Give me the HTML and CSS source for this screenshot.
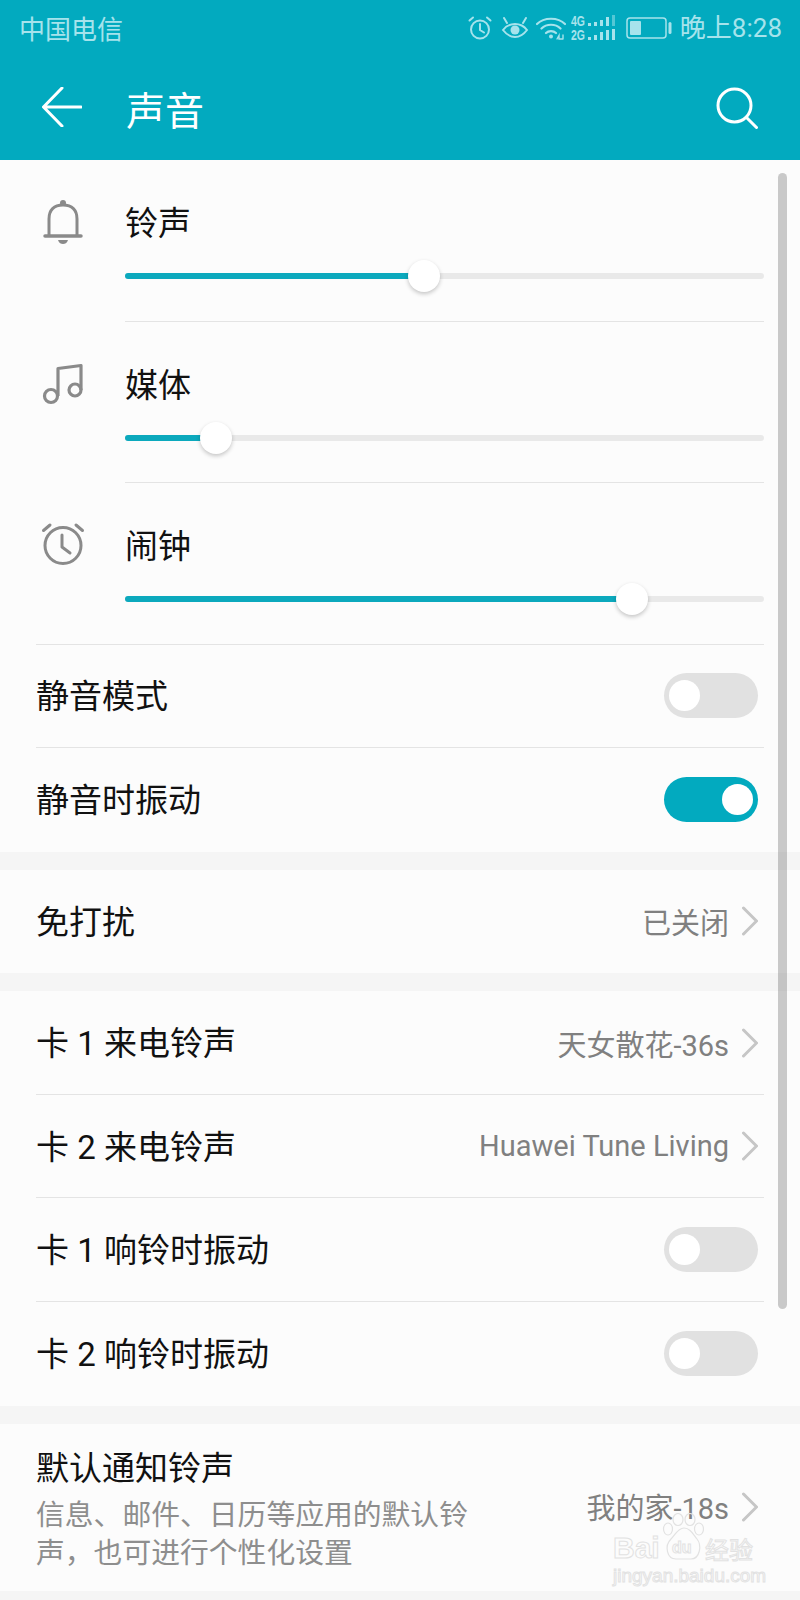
FILE: index.html
```html
<!DOCTYPE html>
<html lang="zh-CN">
<head>
<meta charset="utf-8">
<title>声音</title>
<link rel="stylesheet" href="styles.css">
</head>
<body>
<div class="phone">
  <header class="appbar">
    <div class="status">
      <span class="carrier">中国电信</span>
      <div class="status-right">
        <svg class="si si-alarm" width="24" height="24" viewBox="0 0 24 24" fill="none" stroke="#a6e3ec" stroke-width="2"><circle cx="12" cy="13.5" r="9"/><path d="M12 8v6l4 2.5M1.5 4.5 5 1.5M22.5 4.5 19 1.5" stroke-linecap="round"/></svg>
        <svg class="si si-eye" width="28" height="22" viewBox="0 0 28 22" fill="none" stroke="#a6e3ec" stroke-width="2"><path d="M2 13c3-4 7-6 12-6s9 2 12 6c-3 4-7 7-12 7S5 17 2 13Z"/><circle cx="14" cy="13" r="4.500" fill="#a6e3ec" stroke="none"/><path d="M3 1l3 5M25 1l-3 5" stroke-linecap="round"/></svg>
        <svg class="si si-wifi" width="30" height="24" viewBox="0 0 30 24" fill="none" stroke="#a6e3ec" stroke-width="2.200" stroke-linecap="round"><path d="M1 8C8 1 22 1 29 8M5.500 12.500c5-5 14-5 19 0M10 17c2.500-2.500 7.500-2.500 10 0"/><circle cx="15" cy="20.500" r="2" fill="#a6e3ec" stroke="none"/><path d="M21 23l2-3.500v3.500h3M27 19v4" stroke-width="1.400"/></svg>
        <svg class="si si-signal" width="44" height="34" viewBox="0 -4 44 34">
          <text class="net" x="0" y="11" textLength="14" lengthAdjust="spacingAndGlyphs">4G</text>
          <text class="net" x="0" y="25" textLength="14" lengthAdjust="spacingAndGlyphs">2G</text>
          <g fill="#a6e3ec">
            <rect x="17" y="8" width="3" height="3"/><rect x="23" y="7" width="3" height="4"/><rect x="29" y="5" width="3" height="6"/><rect x="35" y="2" width="3" height="9"/>
            <rect x="41" y="0" width="3" height="11" opacity=".5"/>
            <rect x="17" y="22" width="3" height="3"/><rect x="23" y="20" width="3" height="5"/><rect x="29" y="17" width="3" height="8"/><rect x="35" y="15" width="3" height="10"/><rect x="41" y="14" width="3" height="11"/>
          </g>
        </svg>
        <svg class="si si-batt" width="46" height="22" viewBox="0 0 46 22" fill="none"><rect x="1" y="1" width="39" height="20" rx="3" stroke="#a6e3ec" stroke-width="1.500"/><rect x="4" y="4" width="11" height="14" rx="1" fill="#a6e3ec"/><rect x="42.500" y="5" width="3" height="12" rx="1.500" fill="#a6e3ec"/></svg>
        <span class="time">晚上8:28</span>
      </div>
    </div>
    <div class="toolbar">
      <svg class="back" width="40" height="40" viewBox="0 0 40 40" fill="none" stroke="#fff" stroke-width="3" stroke-linecap="round" stroke-linejoin="round"><path d="M39 20H2M20 1 1.500 20 20 39"/></svg>
      <h1 class="title">声音</h1>
      <svg class="search" width="42" height="42" viewBox="0 0 42 42" fill="none" stroke="#fff" stroke-width="3" stroke-linecap="round"><circle cx="18.500" cy="18.500" r="16.500"/><path d="M30.500 30.500 40.500 40.500"/></svg>
    </div>
  </header>

  <main class="content">
    <section class="group">
      <div class="vol">
        <div class="vol-icon">
          <svg width="44" height="46" viewBox="0 0 44 46" fill="none" stroke="#8a8a8a" stroke-width="3" stroke-linecap="round" stroke-linejoin="round"><path d="M8 36V20C8 11 13 6 22 6s14 5 14 14v16"/><path d="M4 37h36" stroke-width="3.500"/><circle cx="22" cy="4" r="3" fill="#8a8a8a" stroke="none"/><path d="M17 41h10c-1 3-3 4-5 4s-4-1-5-4Z" fill="#8a8a8a" stroke="none"/></svg>
        </div>
        <div class="vol-body">
          <div class="vol-title">铃声</div>
          <div class="track"><div class="fill" style="width:46.8%"><span class="knob"></span></div></div>
        </div>
      </div>
      <div class="vol">
        <div class="vol-icon">
          <svg width="44" height="44" viewBox="0 0 44 44" fill="none" stroke="#8a8a8a" stroke-width="3.200" stroke-linejoin="round"><path d="M17 35V7.500L40 4.500V29"/><circle cx="10" cy="35" r="6.500"/><circle cx="34" cy="29" r="6"/></svg>
        </div>
        <div class="vol-body">
          <div class="vol-title">媒体</div>
          <div class="track"><div class="fill" style="width:14.2%"><span class="knob"></span></div></div>
        </div>
      </div>
      <div class="vol">
        <div class="vol-icon">
          <svg width="44" height="44" viewBox="0 0 44 44" fill="none" stroke="#8a8a8a" stroke-width="3" stroke-linecap="round" stroke-linejoin="round"><circle cx="22" cy="23.500" r="18"/><path d="M21 13v12l8 6M2.500 8.500 9 3M41.500 8.500 35 3"/></svg>
        </div>
        <div class="vol-body vol-body-last">
          <div class="vol-title">闹钟</div>
          <div class="track"><div class="fill" style="width:79.3%"><span class="knob"></span></div></div>
        </div>
      </div>
      <div class="rule"></div>
      <div class="row"><span class="row-label">静音模式</span><span class="switch"></span></div>
      <div class="row row-end"><span class="row-label">静音时振动</span><span class="switch switch-on"></span></div>
    </section>

    <section class="group">
      <div class="row row-end">
        <span class="row-label">免打扰</span>
        <span class="row-value">已关闭</span>
        <svg class="chev" width="16" height="30" viewBox="0 0 16 30" fill="none" stroke="#c6c6c6" stroke-width="3" stroke-linecap="round" stroke-linejoin="round"><path d="M1.500 2 14.500 15 1.500 28"/></svg>
      </div>
    </section>

    <section class="group">
      <div class="row">
        <span class="row-label">卡 1 来电铃声</span>
        <span class="row-value">天女散花-36s</span>
        <svg class="chev" width="16" height="30" viewBox="0 0 16 30" fill="none" stroke="#c6c6c6" stroke-width="3" stroke-linecap="round" stroke-linejoin="round"><path d="M1.500 2 14.500 15 1.500 28"/></svg>
      </div>
      <div class="row">
        <span class="row-label">卡 2 来电铃声</span>
        <span class="row-value">Huawei Tune Living</span>
        <svg class="chev" width="16" height="30" viewBox="0 0 16 30" fill="none" stroke="#c6c6c6" stroke-width="3" stroke-linecap="round" stroke-linejoin="round"><path d="M1.500 2 14.500 15 1.500 28"/></svg>
      </div>
      <div class="row"><span class="row-label">卡 1 响铃时振动</span><span class="switch"></span></div>
      <div class="row row-end"><span class="row-label">卡 2 响铃时振动</span><span class="switch"></span></div>
    </section>

    <section class="group">
      <div class="row row-tall row-end">
        <div class="row-text">
          <div class="row-tall-label">默认通知铃声</div>
          <div class="row-desc">信息、邮件、日历等应用的默认铃声，也可进行个性化设置</div>
        </div>
        <span class="row-value">我的家-18s</span>
        <svg class="chev" width="16" height="30" viewBox="0 0 16 30" fill="none" stroke="#c6c6c6" stroke-width="3" stroke-linecap="round" stroke-linejoin="round"><path d="M1.500 2 14.500 15 1.500 28"/></svg>
      </div>
    </section>
  </main>

  <div class="scrollbar"></div>

  <div class="watermark">
    <svg class="paw" width="42" height="48" viewBox="0 0 42 48" fill="none" stroke="#e2e2e2" stroke-width="1.200"><ellipse cx="16" cy="6.500" rx="5" ry="6"/><ellipse cx="28" cy="6.500" rx="5" ry="6"/><ellipse cx="6" cy="16" rx="4.500" ry="6"/><ellipse cx="37" cy="16" rx="4.500" ry="6"/><path d="M22 15c6 0 9 6 13 11 5 6 3 20-6 20H14C5 46 2 33 9 26c4-4 7-11 13-11Z"/></svg>
    <span class="wm-bai">Bai</span>
    <span class="wm-du">du</span>
    <span class="wm-jy">经验</span>
    <span class="wm-url">jingyan.baidu.com</span>
  </div>
</div>
</body>
</html>
```

FILE: styles.css
```css
* { box-sizing: border-box; }
html, body { margin: 0; padding: 0; }
body {
  width: 800px;
  height: 1600px;
  overflow: hidden;
  background: #f5f5f5;
  font-family: "Noto Sans CJK SC", Roboto, sans-serif;
}
.phone { position: relative; width: 800px; height: 1600px; overflow: hidden; }

.appbar { background: #02aabf; height: 160px; }
.status {
  height: 56px;
  display: flex;
  align-items: center;
  justify-content: space-between;
  padding: 0 18px 0 19px;
}
.carrier { font-size: 26px; line-height: 56px; color: #a6e3ec; }
.status-right { display: flex; align-items: center; }
.si { display: block; flex: none; }
.si-alarm { margin-right: 9px; }
.si-eye { margin-right: 7px; }
.si-wifi { margin-right: 5px; }
.si-signal { margin-right: 11px; }
.si-batt { margin-right: 8px; }
.net {
  font-family: "Liberation Sans", sans-serif;
  font-size: 14px;
  font-weight: 700;
  fill: #a6e3ec;
}
.time { font-family: Roboto, "Noto Sans CJK SC", sans-serif; font-size: 26px; line-height: 56px; color: #a6e3ec; }

.toolbar { height: 104px; display: flex; align-items: center; padding: 0 42px; }
.back { flex: none; margin-top: -2px; }
.title { margin: 0 0 0 44px; font-size: 39px; font-weight: 400; line-height: 50px; color: #fff; }
.search { flex: none; margin-left: auto; }

.content { display: flex; flex-direction: column; gap: 18px; }
.group { background: #fcfcfc; }

.vol { display: flex; height: 161.500px; padding: 0 36px; }
.vol-icon { flex: none; width: 89px; padding: 39px 0 0 5px; height: 100px; }
.vol-icon svg { display: block; }
.vol-body { flex: 1; border-bottom: 1px solid #e4e4e4; padding-top: 38px; }
.vol-body-last { border-bottom: 0; }
.rule { height: 1px; margin: -1px 36px 0; background: #e4e4e4; }
.vol-title { font-size: 33px; line-height: 46px; color: #111; }
.track { margin-top: 29px; height: 6px; border-radius: 3px; background: #e9e9e9; }
.fill { position: relative; height: 6px; border-radius: 3px; background: #0ca9bd; }
.knob {
  position: absolute;
  right: -16px;
  top: -13px;
  width: 32px;
  height: 32px;
  border-radius: 50%;
  background: #fff;
  box-shadow: 0 2px 4px rgba(0, 0, 0, .22);
}

.row {
  display: flex;
  align-items: center;
  height: 103.600px;
  margin: 0 36px;
  border-bottom: 1px solid #e4e4e4;
}
.row-end { border-bottom: 0; }
.row-label {
  margin-top: 3px;
  margin-right: auto;
  font-family: Roboto, "Noto Sans CJK SC", sans-serif;
  font-size: 33px;
  line-height: 46px;
  color: #111;
}
.row-value { font-family: Roboto, "Noto Sans CJK SC", sans-serif; font-size: 29px; color: #808080; white-space: nowrap; }
.chev { flex: none; margin: 0 6px 0 13px; display: block; }

.switch {
  position: relative;
  flex: none;
  display: block;
  width: 94px;
  height: 45px;
  margin-right: 6px;
  border-radius: 23px;
  background: #e1e1e1;
}
.switch::after {
  content: "";
  position: absolute;
  left: 5px;
  top: 7px;
  width: 31px;
  height: 31px;
  border-radius: 50%;
  background: #fff;
}
.switch-on { background: #02aabf; }
.switch-on::after { left: 58px; }

.row-tall { height: 167.500px; }
.row-text { width: 440px; margin-right: auto; margin-top: -2px; }
.row-tall-label { font-size: 33px; line-height: 46px; color: #111; }
.row-desc { font-size: 28.800px; line-height: 37.500px; color: #8e8e8e; margin-top: 5px; }
.row-tall .row-value { margin-top: -2px; }

.scrollbar {
  position: absolute;
  left: 778px;
  top: 173px;
  width: 9px;
  height: 1136px;
  border-radius: 5px;
  background: rgba(0, 0, 0, .2);
}

.watermark { position: absolute; left: 613px; top: 1513px; width: 150px; height: 72px; color: transparent; }
.watermark span { position: absolute; -webkit-text-stroke: 1px #e2e2e2; line-height: 1; white-space: nowrap; }
.paw { position: absolute; left: 49px; top: 0; }
.wm-bai { left: 0; top: 20px; font: 700 30px/1 "Liberation Sans", sans-serif; }
.wm-du { left: 59px; top: 27px; font: 700 16px/1 "Liberation Sans", sans-serif; }
.wm-jy { left: 92px; top: 24px; font-size: 24px; }
.wm-url { left: 0; top: 53px; font: 400 19px/1 "Liberation Sans", sans-serif; }
```
